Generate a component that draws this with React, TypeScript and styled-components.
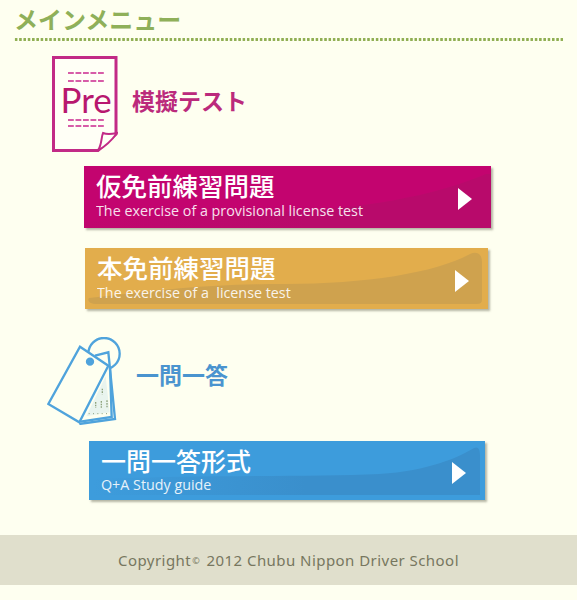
import { FC } from "react";
import styled, { createGlobalStyle } from "styled-components";

const GlobalStyle = createGlobalStyle`
  html, body {
    margin: 0;
    padding: 0;
    background-color: #fefff0;
    font-family: "Noto Sans CJK JP", "Noto Sans", sans-serif;
  }
`;

const Page = styled.div`
  width: 577px;
  height: 600px;
  overflow: hidden;
  display: flex;
  flex-direction: column;
`;

const Header = styled.h1`
  margin: 0 14px;
  height: 41px;
  box-sizing: border-box;
  padding: 2px 0 0 0;
  background-image: radial-gradient(circle at center, #8fae52 1.3px, transparent 1.7px);
  background-size: 4.3px 3px;
  background-repeat: repeat-x;
  background-position: left bottom;
  color: #8fb059;
  font-size: 24px;
  line-height: 34px;
  font-weight: 700;
`;

const SectionHead = styled.div<{ $left: number; $top: number; $gap: number }>`
  display: flex;
  align-items: center;
  gap: ${(p) => p.$gap}px;
  margin: ${(p) => p.$top}px 0 0 ${(p) => p.$left}px;
`;

const SectionTitle = styled.h2<{ $color: string; $lift: number }>`
  margin: 0 0 ${(p) => p.$lift}px 0;
  color: ${(p) => p.$color};
  font-size: 23px;
  line-height: 30px;
  font-weight: 700;
`;

const MenuButton = styled.a<{ $bg: string; $left: number; $width: number; $height: number; $top: number; $pad: number }>`
  position: relative;
  display: flex;
  flex-direction: column;
  box-sizing: border-box;
  width: ${(p) => p.$width}px;
  height: ${(p) => p.$height}px;
  margin: ${(p) => p.$top}px 0 0 ${(p) => p.$left}px;
  padding: ${(p) => p.$pad}px 0 0 12px;
  background-color: ${(p) => p.$bg};
  box-shadow: 2px 2px 2px rgba(110, 110, 90, 0.5);
  color: #fff;
  overflow: hidden;
`;

const Wave = styled.svg`
  position: absolute;
  left: 0;
  top: 0;
  width: 100%;
  height: 100%;
`;

const ButtonTitle = styled.span<{ $size: number; $line: number }>`
  position: relative;
  font-size: ${(p) => p.$size}px;
  line-height: ${(p) => p.$line}px;
  font-weight: 500;
  white-space: nowrap;
`;

const ButtonSub = styled.span`
  position: relative;
  font-family: "Open Sans", "Noto Sans", sans-serif;
  font-size: 14.3px;
  line-height: 17px;
  opacity: 0.88;
  white-space: pre;
`;

const Arrow = styled.i`
  position: absolute;
  right: 19px;
  top: 50%;
  margin-top: -9px;
  width: 0;
  height: 0;
  border-style: solid;
  border-width: 11px 0 11px 14px;
  border-color: transparent transparent transparent #fff;
`;

const Footer = styled.footer`
  margin-top: 35px;
  height: 50px;
  display: flex;
  align-items: center;
  justify-content: center;
  background-color: #e0dfcc;
  color: #77775f;
  font-family: "Noto Sans", sans-serif;
  font-size: 15px;
  letter-spacing: 0.45px;
  white-space: pre;
`;

const Copy = styled.span`
  font-size: 9px;
  margin: 0 2px 0 1px;
`;

const PreIcon: FC = () => (
  <svg width="66" height="96" viewBox="0 0 66 96" fill="none">
    <path d="M1.5 1.5H64V78L46 94.5H1.5Z" stroke="#c22a86" strokeWidth="3" fill="#fffff6" />
    <path d="M46 94.5C50 88 49 82 51 77C56 79 60 78 65 77C60 84 54 90 46 94.5Z" stroke="#c22a86" strokeWidth="2" fill="#fffff6" />
    <path d="M16 17H52M16 25H52M16 64H52M16 70H52" stroke="#d75ca8" strokeWidth="1.8" strokeDasharray="5.8 1.7" />
    <text x="8.5" y="57" fontFamily="Lato, sans-serif" fontWeight="400" fontSize="35" fill="#b8186f">Pre</text>
  </svg>
);

const TagIcon: FC = () => (
  <svg width="76" height="88" viewBox="0 0 228 264" fill="none" stroke="#4fa3dc" strokeWidth="7">
    <circle cx="171" cy="50" r="47" />
    <path d="M144 56L184 46L204 246L97 261" fill="#fefff0" />
    <path d="M189 91L194 240L100 254" />
    <path d="M99 29L184 86L97 256L4 201Z" fill="#fefff0" />
    <circle cx="129" cy="74" r="9" fill="#4fa3dc" />
    <path d="M176 118L118 238L188 226Z" fill="#e9f4ee" strokeWidth="0" />
    <path d="M166 155V172M146 195V212M163 192V212M180 190V212" stroke="#8fa27d" strokeWidth="4" strokeDasharray="5 3" />
    <path d="M125 230H180" stroke="#8fa27d" strokeWidth="3" strokeDasharray="3 10" />
  </svg>
);

interface ButtonProps {
  id: string;
  title: string;
  titleSize: number;
  titleLine: number;
  pad: number;
  sub: string;
  bg: string;
  shade: string;
  fadeFrom: number;
  left: number;
  width: number;
  height: number;
  top: number;
  wave: string;
}

const NavButton: FC<ButtonProps> = ({ id, title, titleSize, titleLine, pad, sub, bg, shade, fadeFrom, left, width, height, top, wave }) => (
  <MenuButton $bg={bg} $left={left} $width={width} $height={height} $top={top} $pad={pad}>
    <Wave viewBox={`0 0 ${width} ${height}`} preserveAspectRatio="none">
      <defs>
        <linearGradient id={id} x1="0" x2="1" y1="0" y2="0">
          <stop offset="0" stopColor={shade} stopOpacity={fadeFrom} />
          <stop offset="0.55" stopColor={shade} stopOpacity="1" />
        </linearGradient>
      </defs>
      <path d={wave} fill={`url(#${id})`} />
    </Wave>
    <ButtonTitle $size={titleSize} $line={titleLine}>{title}</ButtonTitle>
    <ButtonSub>{sub}</ButtonSub>
    <Arrow />
  </MenuButton>
);

export default function App() {
  return (
    <Page>
      <GlobalStyle />
      <Header>メインメニュー</Header>
      <SectionHead $left={52} $top={15} $gap={14}>
        <PreIcon />
        <SectionTitle $color="#bb2a7c" $lift={8}>模擬テスト</SectionTitle>
      </SectionHead>
      <NavButton
        id="waveRed"
        title="仮免前練習問題"
        titleSize={25.5}
        titleLine={35}
        pad={1}
        sub="The exercise of a provisional license test"
        bg="#c3046f"
        shade="#b80a6b"
        fadeFrom={0.25}
        left={84}
        width={407}
        height={62}
        top={14}
        wave="M0 56C80 50 120 48 190 46C280 43 350 30 402 8L407 8V62H0Z"
      />
      <NavButton
        id="waveGold"
        title="本免前練習問題"
        titleSize={25.5}
        titleLine={35}
        pad={1}
        sub="The exercise of a  license test"
        bg="#e2ad4c"
        shade="#cfa24e"
        fadeFrom={1}
        left={85}
        width={403}
        height={61}
        top={20}
        wave="M4 50C90 40 130 36 200 36C280 36 350 25 385 6C392 3 397 6 397 14V52Q397 56 392 56H12C4 56 2 52 4 50Z"
      />
      <SectionHead $left={47} $top={28} $gap={13}>
        <TagIcon />
        <SectionTitle $color="#4a94cf" $lift={14}>一問一答</SectionTitle>
      </SectionHead>
      <NavButton
        id="waveBlue"
        title="一問一答形式"
        titleSize={25}
        titleLine={31}
        pad={4}
        sub="Q+A Study guide"
        bg="#3d9cdc"
        shade="#3a8fcc"
        fadeFrom={0}
        left={89}
        width={396}
        height={59}
        top={16}
        wave="M4 38C120 34 220 36 290 33C340 30 370 16 385 7C389 5 391 8 391 14V54H4Z"
      />
      <Footer>
        Copyright<Copy>©</Copy> 2012 Chubu Nippon Driver School
      </Footer>
    </Page>
  );
}
